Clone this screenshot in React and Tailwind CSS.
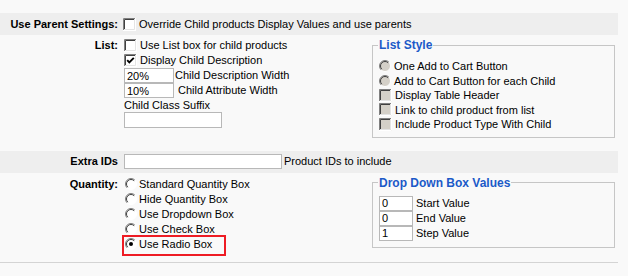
import React from "react";

const Check = ({ checked, disabled }) => (
  <svg width="13" height="13" viewBox="0 0 13 13" className="shrink-0">
    <rect x="0" y="0" width="13" height="13" fill={disabled ? "#d4d0c8" : "#ffffff"} />
    <path d="M0.5 12.5 V0.5 H12.5" fill="none" stroke="#808080" />
    <path d="M1.5 11.5 V1.5 H11.5" fill="none" stroke="#404040" />
    <path d="M1 11.5 H11.5 V1" fill="none" stroke="#e4e4e4" />
    <path d="M0 12.5 H12.5 V0" fill="none" stroke="#ffffff" />
    {checked && (
      <path d="M3.2 6.2 L5.3 8.4 L9.8 3.8" fill="none" stroke="#000" strokeWidth="1.9" />
    )}
  </svg>
);

const Radio = ({ checked, disabled }) => (
  <svg width="12" height="12" viewBox="0 0 12 12" className="shrink-0">
    <circle cx="6" cy="6" r="5.5" fill={disabled ? "#d4d0c8" : "#ffffff"} />
    <path d="M2.1 9.9 A5.5 5.5 0 0 1 9.9 2.1" fill="none" stroke="#808080" />
    <path d="M2.8 9.2 A4.5 4.5 0 0 1 9.2 2.8" fill="none" stroke="#404040" />
    <path d="M9.9 2.1 A5.5 5.5 0 0 1 2.1 9.9" fill="none" stroke="#ffffff" />
    {checked && <circle cx="6" cy="6" r="2" fill="#000" />}
  </svg>
);

const Field = ({ value, w, h = "h-[15px]" }) => (
  <input
    readOnly
    value={value}
    className={`${w} ${h} shrink-0 border border-[#b8b8b8] bg-white px-[2px] text-[11px] leading-none outline-none`}
  />
);

const Legend = ({ children }) => (
  <legend className="ml-[-1px] px-[1px] text-[12px] font-bold leading-[14px] text-[#1c5ac8]">
    {children}
  </legend>
);

export default function App() {
  return (
    <div className="h-[276px] w-full bg-[#f9f9f9] font-['Liberation_Sans',Arial,sans-serif] text-[11px] text-black">
      <div className="w-[618px] pt-[13px]">
        <div className="flex h-[22px] items-center bg-[#eeeeee]">
          <div className="w-[118px] text-right font-bold">Use Parent Settings:</div>
          <div className="ml-[5px] flex items-center gap-[3px]">
            <Check />
            <span>Override Child products Display Values and use parents</span>
          </div>
        </div>

        <div className="mt-[3px] flex items-start">
          <div className="h-[15px] w-[118px] text-right font-bold leading-[15px]">List:</div>
          <div className="ml-[6px] flex w-[248px] flex-col">
            <div className="flex h-[15px] items-center gap-[3px]">
              <Check />
              <span>Use List box for child products</span>
            </div>
            <div className="flex h-[15px] items-center gap-[3px]">
              <Check checked />
              <span>Display Child Description</span>
            </div>
            <div className="flex h-[15px] items-center">
              <Field value="20%" w="w-[50px]" />
              <span className="ml-[1px]">Child Description Width</span>
            </div>
            <div className="flex h-[15px] items-center">
              <Field value="10%" w="w-[50px]" />
              <span className="ml-[4px]">Child Attribute Width</span>
            </div>
            <div className="h-[14px] leading-[14px]">Child Class Suffix</div>
            <Field value="" w="w-[98px]" h="h-[16px]" />
          </div>
          <fieldset className="w-[243px] border border-[#c6c6c6] px-[6px] pb-[5px] pt-[7px]">
            <Legend>List Style</Legend>
            {[
              ["r", "One Add to Cart Button"],
              ["r", "Add to Cart Button for each Child"],
              ["c", "Display Table Header"],
              ["c", "Link to child product from list"],
              ["c", "Include Product Type With Child"],
            ].map(([t, label]) => (
              <div key={label} className="flex h-[14.5px] items-center gap-[3px]">
                {t === "r" ? <Radio disabled /> : <Check disabled />}
                <span>{label}</span>
              </div>
            ))}
          </fieldset>
        </div>

        <div className="mt-[13px] flex h-[22px] items-center bg-[#eeeeee]">
          <div className="w-[118px] text-right font-bold">Extra IDs</div>
          <div className="ml-[6px] flex items-center">
            <Field value="" w="w-[158px]" />
            <span className="ml-[2px]">Product IDs to include</span>
          </div>
        </div>

        <div className="mt-[3px] flex items-start">
          <div className="mt-[1px] h-[15px] w-[118px] text-right font-bold leading-[15px]">Quantity:</div>
          <div className="ml-[7px] flex w-[247px] flex-col pt-[1px]">
            {[
              "Standard Quantity Box",
              "Hide Quantity Box",
              "Use Dropdown Box",
              "Use Check Box",
            ].map((label) => (
              <div key={label} className="flex h-[15px] items-center gap-[2px]">
                <Radio />
                <span>{label}</span>
              </div>
            ))}
            <div className="relative flex h-[15px] items-center gap-[2px]">
              <Radio checked />
              <span>Use Radio Box</span>
              <span className="absolute left-[-3px] top-[-2px] h-[21px] w-[104px] border-2 border-[#ee1c24]" />
            </div>
          </div>
          <fieldset className="w-[243px] border border-[#c6c6c6] px-[6px] pb-[6px] pt-[6px]">
            <Legend>Drop Down Box Values</Legend>
            {[
              ["0", "Start Value"],
              ["0", "End Value"],
              ["1", "Step Value"],
            ].map(([v, label]) => (
              <div key={label} className="flex h-[15px] items-center">
                <Field value={v} w="w-[34px]" />
                <span className="ml-[3px]">{label}</span>
              </div>
            ))}
          </fieldset>
        </div>

        <div className="mt-[10px] border-t border-[#d4d4d4]" />
      </div>
    </div>
  );
}
